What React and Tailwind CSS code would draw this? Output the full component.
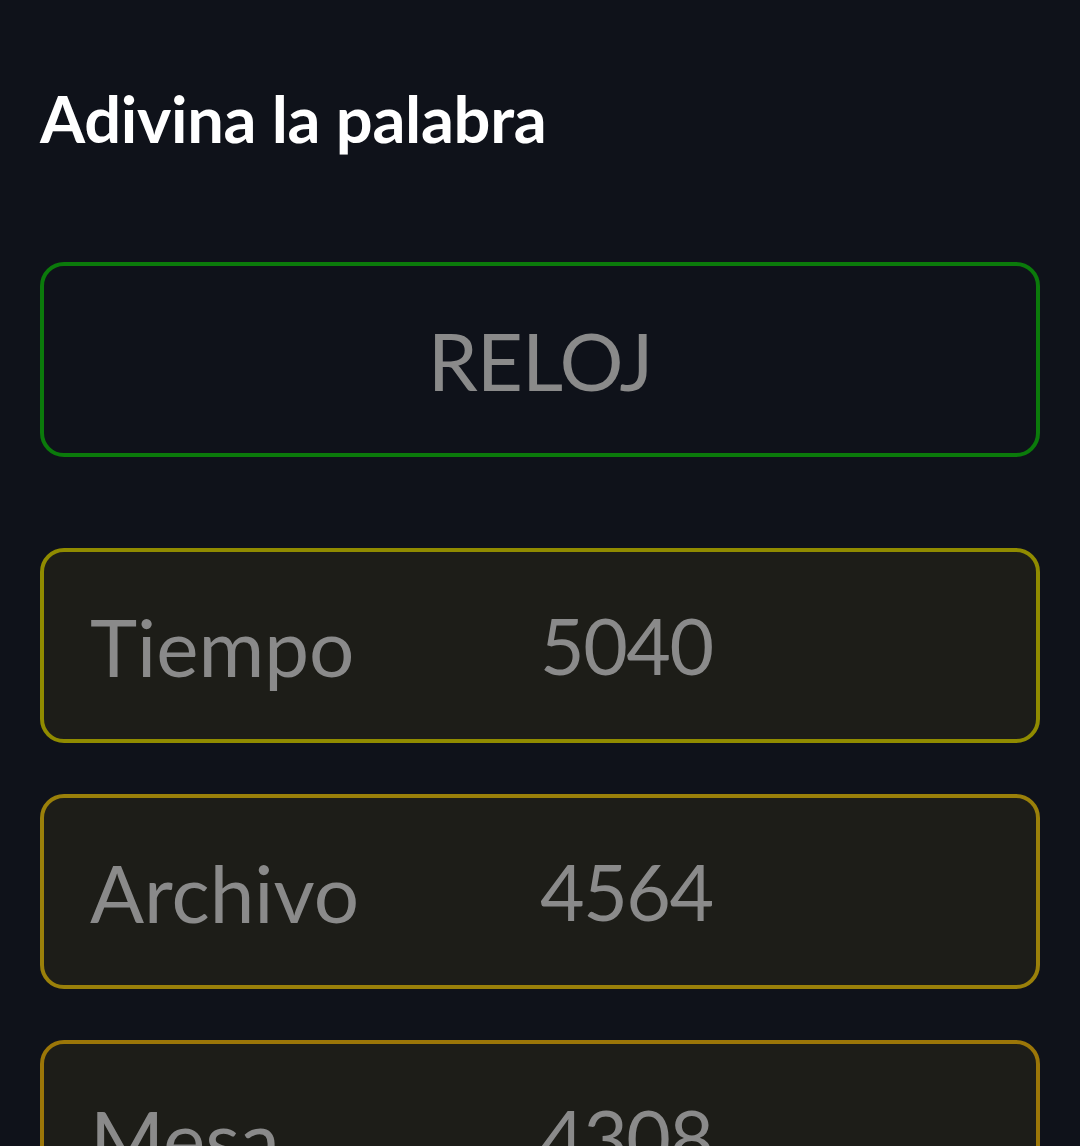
import React from 'react';

const rows = [
  { word: 'Tiempo', score: 5040, border: 'border-[#908b00]' },
  { word: 'Archivo', score: 4564, border: 'border-[#9a800a]' },
  { word: 'Mesa', score: 4308, border: 'border-[#9b7608]' },
];

export default function App() {
  return (
    <div
      className="h-[1146px] overflow-hidden bg-[#0f121a] px-10"
      style={{ fontFamily: 'Lato, "Noto Sans", sans-serif' }}
    >
      {/* Title */}
      <h1 className="pt-[78px] text-[65px] leading-[80px] font-bold text-white tracking-[-0.3px]">
        Adivina la palabra
      </h1>

      {/* Target word */}
      <div className="mt-[104px] h-[195px] rounded-[24px] border-4 border-[#0b7a0b] flex items-center justify-center">
        <span className="text-[80px] text-[#8a8a8a] tracking-[-1px]">RELOJ</span>
      </div>

      {/* Guesses */}
      <div className="mt-[91px] flex flex-col gap-[51px]">
        {rows.map((r) => (
          <div
            key={r.word}
            className={`h-[195px] rounded-[24px] border-4 ${r.border} bg-[#1d1d18] flex items-center pl-[46px] shrink-0`}
          >
            <span className="w-[450px] text-[80px] text-[#8a8a8a]">{r.word}</span>
            <span className="text-[77px] text-[#8a8a8a] tracking-[-1.5px]">{r.score}</span>
          </div>
        ))}
      </div>
    </div>
  );
}
